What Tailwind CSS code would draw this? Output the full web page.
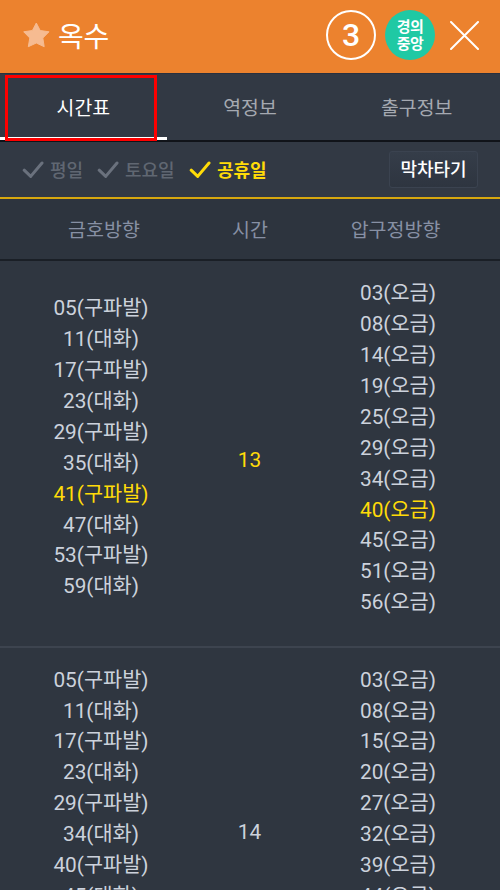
<!DOCTYPE html>
<html lang="ko">
<head>
<meta charset="utf-8">
<title>옥수</title>
<script src="https://cdn.jsdelivr.net/npm/@tailwindcss/browser@4"></script>
</head>
<body class="w-[500px] h-[890px] overflow-hidden bg-[#2f3640] font-[Roboto,'Noto_Sans_CJK_KR',sans-serif]">
<div class="flex flex-col w-[500px] h-[890px] overflow-hidden">
  <header class="flex items-center h-[73px] shrink-0 bg-[#ec822e] pl-[23px] pr-[21px] pb-[3px]">
    <svg class="w-[27px] h-[26px]" viewBox="0 0 27 26" fill="#f6bb91" stroke="#f6bb91" stroke-width="1" stroke-linejoin="round"><path d="M13.3 1L17.2 8.5L26 9.8L19.8 16L21.2 24.7L13.3 21L5.3 24.7L6.8 16L.7 9.8L9.4 8.5Z"/></svg>
    <h1 class="ml-[8px] pt-[5px] text-[28px] leading-[40px] text-white tracking-[-0.2px]">옥수</h1>
    <div class="ml-auto w-[50px] h-[50px] rounded-full border-2 border-white flex items-center justify-center text-white text-[32px] font-medium leading-none">3</div>
    <div class="ml-[9px] w-[50px] h-[50px] rounded-full bg-[#1fc9a4] flex items-center justify-center text-center text-white text-[15px] leading-[17px] font-bold tracking-[-0.5px] pt-[2px]">경의<br>중앙</div>
    <svg class="ml-[15px] w-[29px] h-[29px]" viewBox="0 0 29 29" stroke="#fff" stroke-width="2" stroke-linecap="round"><path d="M1 1L28 28M28 1L1 28"/></svg>
  </header>
  <nav class="relative grid grid-cols-3 h-[69px] shrink-0 bg-[#323944] border-t border-t-[#29303e] border-b-2 border-b-[#101319] text-[19.4px] text-[#a5a9b1] text-center leading-[70px]">
    <div class="text-white border-b-[3px] border-white h-[66px]">시간표</div>
    <div>역정보</div>
    <div>출구정보</div>
    <div class="absolute left-[5px] top-[1px] w-[152px] h-[66px] border-3 border-[#fe0000]"></div>
  </nav>
  <section class="flex items-center h-[57px] shrink-0 bg-[#323944] border-b-2 border-[#d7a70e] pl-[22px] pr-[22px] text-[18px] text-[#606772] font-medium">
    <svg class="w-[22px] h-[18px]" viewBox="0 0 22 18" fill="none" stroke="#6a717d" stroke-width="3" stroke-linecap="round" stroke-linejoin="round"><path d="M2.2 9.2L8.7 15.4L20 2"/></svg>
    <span class="ml-[6px] pt-[1px] w-[33px] whitespace-nowrap">평일</span>
    <svg class="ml-[14px] w-[22px] h-[18px]" viewBox="0 0 22 18" fill="none" stroke="#6a717d" stroke-width="3" stroke-linecap="round" stroke-linejoin="round"><path d="M2.2 9.2L8.7 15.4L20 2"/></svg>
    <span class="ml-[6px] pt-[1px] w-[50px] whitespace-nowrap">토요일</span>
    <svg class="ml-[14px] w-[22px] h-[18px]" viewBox="0 0 22 18" fill="none" stroke="#ffdb08" stroke-width="3" stroke-linecap="round" stroke-linejoin="round"><path d="M2.2 9.2L8.7 15.4L20 2"/></svg>
    <span class="ml-[6px] pt-[1px] whitespace-nowrap text-[#ffdb08] font-bold">공휴일</span>
    <button class="ml-auto w-[89px] h-[37px] rounded-[3px] border border-[#3b4350] bg-linear-to-b from-[#353d49] to-[#2e3540] text-white text-[18px] font-medium">막차타기</button>
  </section>
  <div class="grid grid-cols-[208px_84px_208px] h-[62px] shrink-0 bg-[#2d343e] border-b-2 border-[#1a1f26] text-[19.5px] leading-[64px] text-[#8790a4] text-center">
    <div>금호방향</div><div>시간</div><div class="-ml-[1px]">압구정방향</div>
  </div>
  <section class="grid grid-cols-[202px_95px_202px] h-[387px] shrink-0 pt-[17.2px] border-b-2 border-[#3d444f] text-[20.8px] leading-[30.9px] text-[#ccd2dc] text-center">
    <ul class="pt-[15px]"><li>05(구파발)</li><li>11(대화)</li><li>17(구파발)</li><li>23(대화)</li><li>29(구파발)</li><li>35(대화)</li><li class="text-[#ffdb08]">41(구파발)</li><li>47(대화)</li><li>53(구파발)</li><li>59(대화)</li></ul>
    <div class="pt-[167px] text-[#ffdb08]">13</div>
    <ul><li>03(오금)</li><li>08(오금)</li><li>14(오금)</li><li>19(오금)</li><li>25(오금)</li><li>29(오금)</li><li>34(오금)</li><li class="text-[#ffdb08]">40(오금)</li><li>45(오금)</li><li>51(오금)</li><li>56(오금)</li></ul>
  </section>
  <section class="grid grid-cols-[202px_95px_202px] h-[242px] shrink-0 pt-[16.6px] text-[20.8px] leading-[30.9px] text-[#ccd2dc] text-center">
    <ul><li>05(구파발)</li><li>11(대화)</li><li>17(구파발)</li><li>23(대화)</li><li>29(구파발)</li><li>34(대화)</li><li>40(구파발)</li><li>45(대화)</li></ul>
    <div class="pt-[152px]">14</div>
    <ul><li>03(오금)</li><li>08(오금)</li><li>15(오금)</li><li>20(오금)</li><li>27(오금)</li><li>32(오금)</li><li>39(오금)</li><li>44(오금)</li></ul>
  </section>
</div>
</body>
</html>
